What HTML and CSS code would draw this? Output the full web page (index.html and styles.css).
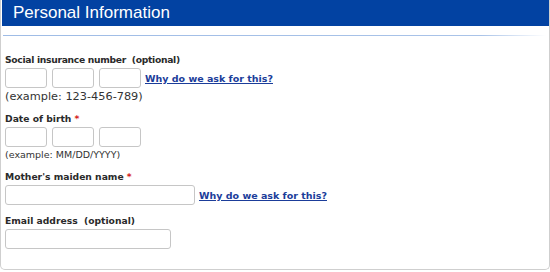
FILE: index.html
```html
<!DOCTYPE html>
<html lang="en">
  <head>
    <meta charset="UTF-8" />
    <title>Personal Information</title>
    <link rel="stylesheet" href="styles.css">
  </head>
  <body>
    <div class="panel">
      <h2 class="panel-title">Personal Information</h2>
      <div class="rule"></div>

      <form class="panel-body">
        <!-- SIN -->
        <div class="field">
          <label class="label tight">Social insurance number&nbsp; (optional)</label>
          <div class="row">
            <input type="text" class="box short" />
            <input type="text" class="box short" />
            <input type="text" class="box short" />
            <a href="#" class="why">Why do we ask for this?</a>
          </div>
          <p class="hint big">(example: 123-456-789)</p>
        </div>

        <!-- Date of birth -->
        <div class="field">
          <label class="label">Date of birth <span class="req">*</span></label>
          <div class="row">
            <input type="text" class="box short" />
            <input type="text" class="box short" />
            <input type="text" class="box short" />
          </div>
          <p class="hint small">(example: MM/DD/YYYY)</p>
        </div>

        <!-- Maiden name -->
        <div class="field">
          <label class="label">Mother's maiden name <span class="req">*</span></label>
          <div class="row">
            <input type="text" class="box long" />
            <a href="#" class="why">Why do we ask for this?</a>
          </div>
        </div>

        <!-- Email -->
        <div class="field">
          <label class="label">Email address&nbsp; (optional)</label>
          <div class="row">
            <input type="email" class="box mid" />
          </div>
        </div>
      </form>
    </div>
  </body>
</html>
```

FILE: styles.css
```css
* {
  margin: 0;
  padding: 0;
  box-sizing: border-box;
}
body {
  background-color: #fff;
  font-family: "DejaVu Sans", Verdana, sans-serif;
  color: #2a2a2a;
  width: 550px;
  height: 272px;
}
.panel {
  width: 550px;
  height: 270px;
  border: 1px solid #cfcfcf;
  border-top: none;
  border-radius: 0 0 5px 5px;
}
.panel-title {
  background-color: #0242a2;
  color: #fff;
  font-family: "Liberation Sans", Arial, sans-serif;
  font-weight: normal;
  font-size: 17px;
  height: 26px;
  line-height: 26px;
  padding-left: 11px;
  margin: 0 0 0 1px;
}
.rule {
  height: 1px;
  margin: 9px 3px 0 2px;
  background: linear-gradient(to right, #9fbce6 0%, #a9c3e8 88%, #fff 100%);
}
.panel-body {
  padding: 18px 0 0 4px;
}
.field {
  margin-bottom: 10px;
}
.label {
  display: block;
  font-size: 9.2px;
  font-weight: bold;
  line-height: 12px;
  margin-bottom: 2px;
}
.label.tight {
  letter-spacing: -0.3px;
}
.req {
  color: #d41a1a;
}
.row {
  display: flex;
  align-items: center;
  gap: 5px;
}
.box {
  height: 20px;
  border: 1px solid #c6c6c6;
  border-radius: 3px;
  background: #fff;
}
.short {
  width: 42px;
}
.long {
  width: 190px;
}
.mid {
  width: 166px;
}
.why {
  font-size: 9.5px;
  font-weight: bold;
  color: #1b3d9a;
  margin-left: -1px;
  margin-top: 1px;
}
.hint {
  margin-top: 2px;
  color: #333;
}
.hint.big {
  font-size: 11.3px;
  line-height: 13px;
}
.hint.small {
  font-size: 9.5px;
  line-height: 12px;
  margin-bottom: 1px;
}
```
